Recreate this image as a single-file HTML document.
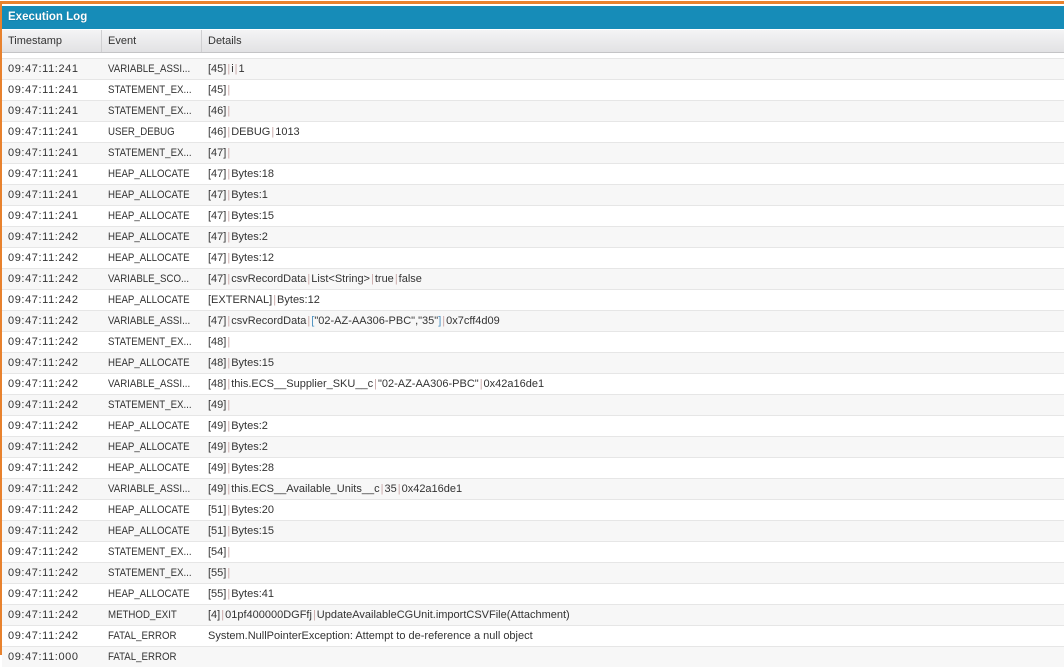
<!DOCTYPE html>
<html><head><meta charset="utf-8"><style>
*{margin:0;padding:0;box-sizing:border-box}
html,body{width:1064px;height:655px;overflow:hidden;background:#fff;font-family:"Liberation Sans",sans-serif;font-size:11px;color:#333}
.ob{position:absolute;left:0;top:1px;width:1064px;height:3px;background:#e8822e}
.ol{position:absolute;left:0;top:1px;width:2px;height:654px;background:#e8822e}
.bar{position:absolute;left:2px;top:6px;right:0;height:23px;background:#168cb8;color:#fff;font-weight:bold;font-size:11.5px;line-height:23px;padding-left:6px;text-shadow:0 0 1px #0a5f80}
.hd{position:absolute;left:2px;top:30px;right:0;height:23px;background:linear-gradient(#f4f4f5,#e2e2e4);border-bottom:1px solid #c4c4c6;line-height:22px}
.hd span{position:absolute;top:0;height:22px;padding-left:6px;border-right:1px solid #cfcfd1}
.rows{position:absolute;left:2px;top:58px;right:0}
.r{height:21px;line-height:20px;border-top:1px solid #e6e6e6;position:relative;white-space:nowrap}
.r:nth-child(odd){background:#f7f7f7}
.r span{position:absolute;top:0}
.a{left:6px;letter-spacing:0.6px}.b{left:106px;transform:scaleX(0.88);transform-origin:0 0}.c{left:206px}
i{font-style:normal;color:#c9a7a7;padding:0 1px}
em{font-style:normal;color:#4a90c0}
</style></head><body>
<div class="ob"></div><div class="ol"></div>
<div class="bar">Execution Log</div>
<div class="hd"><span style="left:0;width:100px">Timestamp</span><span style="left:100px;width:100px">Event</span><span style="left:200px;width:862px;border:none">Details</span></div>
<div class="rows">
<div class="r"><span class="a">09:47:11:241</span><span class="b">VARIABLE_ASSI...</span><span class="c">[45]<i>|</i>i<i>|</i>1</span></div>
<div class="r"><span class="a">09:47:11:241</span><span class="b">STATEMENT_EX...</span><span class="c">[45]<i>|</i></span></div>
<div class="r"><span class="a">09:47:11:241</span><span class="b">STATEMENT_EX...</span><span class="c">[46]<i>|</i></span></div>
<div class="r"><span class="a">09:47:11:241</span><span class="b">USER_DEBUG</span><span class="c">[46]<i>|</i>DEBUG<i>|</i>1013</span></div>
<div class="r"><span class="a">09:47:11:241</span><span class="b">STATEMENT_EX...</span><span class="c">[47]<i>|</i></span></div>
<div class="r"><span class="a">09:47:11:241</span><span class="b">HEAP_ALLOCATE</span><span class="c">[47]<i>|</i>Bytes:18</span></div>
<div class="r"><span class="a">09:47:11:241</span><span class="b">HEAP_ALLOCATE</span><span class="c">[47]<i>|</i>Bytes:1</span></div>
<div class="r"><span class="a">09:47:11:241</span><span class="b">HEAP_ALLOCATE</span><span class="c">[47]<i>|</i>Bytes:15</span></div>
<div class="r"><span class="a">09:47:11:242</span><span class="b">HEAP_ALLOCATE</span><span class="c">[47]<i>|</i>Bytes:2</span></div>
<div class="r"><span class="a">09:47:11:242</span><span class="b">HEAP_ALLOCATE</span><span class="c">[47]<i>|</i>Bytes:12</span></div>
<div class="r"><span class="a">09:47:11:242</span><span class="b">VARIABLE_SCO...</span><span class="c">[47]<i>|</i>csvRecordData<i>|</i>List&lt;String&gt;<i>|</i>true<i>|</i>false</span></div>
<div class="r"><span class="a">09:47:11:242</span><span class="b">HEAP_ALLOCATE</span><span class="c">[EXTERNAL]<i>|</i>Bytes:12</span></div>
<div class="r"><span class="a">09:47:11:242</span><span class="b">VARIABLE_ASSI...</span><span class="c">[47]<i>|</i>csvRecordData<i>|</i><em>[</em>"02-AZ-AA306-PBC","35"<em>]</em><i>|</i>0x7cff4d09</span></div>
<div class="r"><span class="a">09:47:11:242</span><span class="b">STATEMENT_EX...</span><span class="c">[48]<i>|</i></span></div>
<div class="r"><span class="a">09:47:11:242</span><span class="b">HEAP_ALLOCATE</span><span class="c">[48]<i>|</i>Bytes:15</span></div>
<div class="r"><span class="a">09:47:11:242</span><span class="b">VARIABLE_ASSI...</span><span class="c">[48]<i>|</i>this.ECS__Supplier_SKU__c<i>|</i>"02-AZ-AA306-PBC"<i>|</i>0x42a16de1</span></div>
<div class="r"><span class="a">09:47:11:242</span><span class="b">STATEMENT_EX...</span><span class="c">[49]<i>|</i></span></div>
<div class="r"><span class="a">09:47:11:242</span><span class="b">HEAP_ALLOCATE</span><span class="c">[49]<i>|</i>Bytes:2</span></div>
<div class="r"><span class="a">09:47:11:242</span><span class="b">HEAP_ALLOCATE</span><span class="c">[49]<i>|</i>Bytes:2</span></div>
<div class="r"><span class="a">09:47:11:242</span><span class="b">HEAP_ALLOCATE</span><span class="c">[49]<i>|</i>Bytes:28</span></div>
<div class="r"><span class="a">09:47:11:242</span><span class="b">VARIABLE_ASSI...</span><span class="c">[49]<i>|</i>this.ECS__Available_Units__c<i>|</i>35<i>|</i>0x42a16de1</span></div>
<div class="r"><span class="a">09:47:11:242</span><span class="b">HEAP_ALLOCATE</span><span class="c">[51]<i>|</i>Bytes:20</span></div>
<div class="r"><span class="a">09:47:11:242</span><span class="b">HEAP_ALLOCATE</span><span class="c">[51]<i>|</i>Bytes:15</span></div>
<div class="r"><span class="a">09:47:11:242</span><span class="b">STATEMENT_EX...</span><span class="c">[54]<i>|</i></span></div>
<div class="r"><span class="a">09:47:11:242</span><span class="b">STATEMENT_EX...</span><span class="c">[55]<i>|</i></span></div>
<div class="r"><span class="a">09:47:11:242</span><span class="b">HEAP_ALLOCATE</span><span class="c">[55]<i>|</i>Bytes:41</span></div>
<div class="r"><span class="a">09:47:11:242</span><span class="b">METHOD_EXIT</span><span class="c">[4]<i>|</i>01pf400000DGFfj<i>|</i>UpdateAvailableCGUnit.importCSVFile(Attachment)</span></div>
<div class="r"><span class="a">09:47:11:242</span><span class="b">FATAL_ERROR</span><span class="c">System.NullPointerException: Attempt to de-reference a null object</span></div>
<div class="r"><span class="a">09:47:11:000</span><span class="b">FATAL_ERROR</span><span class="c"></span></div>
</div>
</body></html>
